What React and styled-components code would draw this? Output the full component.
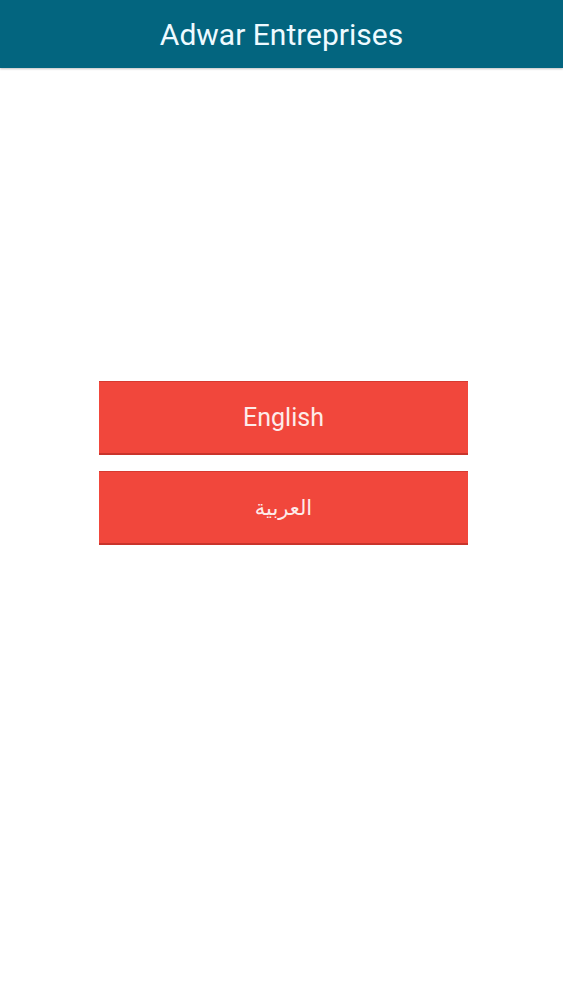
import React from 'react';
import styled, {createGlobalStyle} from 'styled-components';

const GlobalStyle = createGlobalStyle`
    html, body {
        margin: 0;
        padding: 0;
        background: #fff;
        font-family: Roboto, "DejaVu Sans", sans-serif;
    }
`

const Page = styled.div`
    min-height: 1000px;
    display: flex;
    flex-direction: column;
`

const Header = styled.header`
    height: 68px;
    background: #03657f;
    color: #eefaff;
    display: flex;
    align-items: center;
    justify-content: center;
    font-size: 30px;
    box-shadow: 0 1px 2px rgba(0, 0, 0, 0.25);
`

const Buttons = styled.div`
    display: flex;
    flex-direction: column;
    gap: 16px;
    width: 369px;
    margin: 313px auto 0 99px;
`

const LangButton = styled.button`
    height: 74px;
    border: none;
    border-top: 1px solid #d63a30;
    border-bottom: 2px solid #c9342b;
    background: #f1473c;
    color: #fdecea;
    font-family: Roboto, "DejaVu Sans", sans-serif;
    font-size: ${({small}) => (small ? '21px' : '25px')};
    padding: 0;
    cursor: pointer;
`

const App = () => {
    return (
        <>
            <GlobalStyle/>
            <Page>
                <Header>Adwar Entreprises</Header>
                <Buttons>
                    <LangButton>English</LangButton>
                    <LangButton small dir="rtl">العربية</LangButton>
                </Buttons>
            </Page>
        </>
    )
}

export default App
